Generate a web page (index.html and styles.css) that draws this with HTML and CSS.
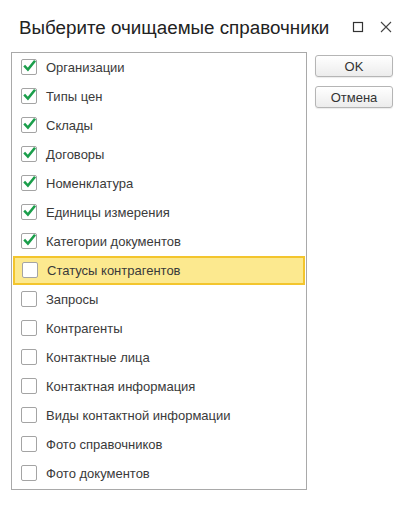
FILE: index.html
```html
<!DOCTYPE html>
<html lang="ru">
<head>
<meta charset="utf-8">
<link rel="stylesheet" href="styles.css">
</head>
<body>
<div class="dialog">
  <div class="header">
    <div class="title">Выберите очищаемые справочники</div>
    <div class="win-btns">
      <svg class="ico" width="12" height="12" viewBox="0 0 12 12"><rect x="1.5" y="1.5" width="9" height="9" fill="none" stroke="#333" stroke-width="1.2"/></svg>
      <svg class="ico" width="12" height="12" viewBox="0 0 12 12"><path d="M1 1L11 11M11 1L1 11" stroke="#444" stroke-width="1.1" fill="none"/></svg>
    </div>
  </div>
  <div class="body">
    <div class="list">
      <div class="row"><span class="cb on"><svg viewBox="0 0 16 16"><path d="M3 8.2L6.5 11.8L13.2 3.5" stroke="#1b9e4b" stroke-width="2.4" fill="none"/></svg></span><span class="label">Организации</span></div>
      <div class="row"><span class="cb on"><svg viewBox="0 0 16 16"><path d="M3 8.2L6.5 11.8L13.2 3.5" stroke="#1b9e4b" stroke-width="2.4" fill="none"/></svg></span><span class="label">Типы цен</span></div>
      <div class="row"><span class="cb on"><svg viewBox="0 0 16 16"><path d="M3 8.2L6.5 11.8L13.2 3.5" stroke="#1b9e4b" stroke-width="2.4" fill="none"/></svg></span><span class="label">Склады</span></div>
      <div class="row"><span class="cb on"><svg viewBox="0 0 16 16"><path d="M3 8.2L6.5 11.8L13.2 3.5" stroke="#1b9e4b" stroke-width="2.4" fill="none"/></svg></span><span class="label">Договоры</span></div>
      <div class="row"><span class="cb on"><svg viewBox="0 0 16 16"><path d="M3 8.2L6.5 11.8L13.2 3.5" stroke="#1b9e4b" stroke-width="2.4" fill="none"/></svg></span><span class="label">Номенклатура</span></div>
      <div class="row"><span class="cb on"><svg viewBox="0 0 16 16"><path d="M3 8.2L6.5 11.8L13.2 3.5" stroke="#1b9e4b" stroke-width="2.4" fill="none"/></svg></span><span class="label">Единицы измерения</span></div>
      <div class="row"><span class="cb on"><svg viewBox="0 0 16 16"><path d="M3 8.2L6.5 11.8L13.2 3.5" stroke="#1b9e4b" stroke-width="2.4" fill="none"/></svg></span><span class="label">Категории документов</span></div>
      <div class="row sel"><span class="cb"></span><span class="label">Статусы контрагентов</span></div>
      <div class="row"><span class="cb"></span><span class="label">Запросы</span></div>
      <div class="row"><span class="cb"></span><span class="label">Контрагенты</span></div>
      <div class="row"><span class="cb"></span><span class="label">Контактные лица</span></div>
      <div class="row"><span class="cb"></span><span class="label">Контактная информация</span></div>
      <div class="row"><span class="cb"></span><span class="label">Виды контактной информации</span></div>
      <div class="row"><span class="cb"></span><span class="label">Фото справочников</span></div>
      <div class="row"><span class="cb"></span><span class="label">Фото документов</span></div>
    </div>
    <div class="buttons">
      <button class="btn">OK</button>
      <button class="btn">Отмена</button>
    </div>
  </div>
</div>
</body>
</html>
```
FILE: styles.css
```css
html, body {
  margin: 0;
  padding: 0;
  background: #fff;
}
body {
  font-family: Arial, "Liberation Sans", sans-serif;
  color: #333;
  width: 412px;
  height: 508px;
  overflow: hidden;
}
.header {
  height: 52px;
  display: flex;
  align-items: center;
  padding: 0 20px 0 19px;
  box-sizing: border-box;
}
.title {
  flex: 1;
  font-size: 18.8px;
  color: #222;
  padding-top: 4px;
}
.win-btns {
  display: flex;
  gap: 16px;
  align-items: center;
  padding-top: 1px;
}
.ico { display: block; }
.body {
  display: flex;
  align-items: flex-start;
  padding-left: 11px;
}
.list {
  width: 296px;
  box-sizing: border-box;
  border: 1px solid #a9a9a9;
  padding: 0 0 1px 0;
}
.row {
  height: 29px;
  display: flex;
  align-items: center;
  padding-left: 9px;
  padding-bottom: 1px;
  box-sizing: border-box;
  font-size: 13px;
  color: #3a3a3a;
}
.row.sel {
  background: #fce98f;
  border: 2px solid #f3c52d;
  padding-left: 7px;
  margin: 0 1px;
}
.cb {
  width: 14px;
  height: 14px;
  border: 1px solid #a4a4a4;
  border-radius: 2px;
  background: #fff;
  position: relative;
  flex: none;
}
.cb svg {
  position: absolute;
  left: -1px;
  top: -3px;
  width: 17px;
  height: 17px;
}
.label {
  margin-left: 9px;
}
.buttons {
  display: flex;
  flex-direction: column;
  gap: 9px;
  margin-left: 8px;
  padding-top: 3px;
}
.btn {
  width: 78px;
  height: 22px;
  border: 1px solid #b5b5b5;
  border-radius: 3px;
  background: linear-gradient(#ffffff, #ececec);
  box-shadow: 0 1px 1px rgba(0,0,0,0.08);
  font-family: Arial, "Liberation Sans", sans-serif;
  font-size: 13px;
  color: #333;
  padding: 0;
}
```
